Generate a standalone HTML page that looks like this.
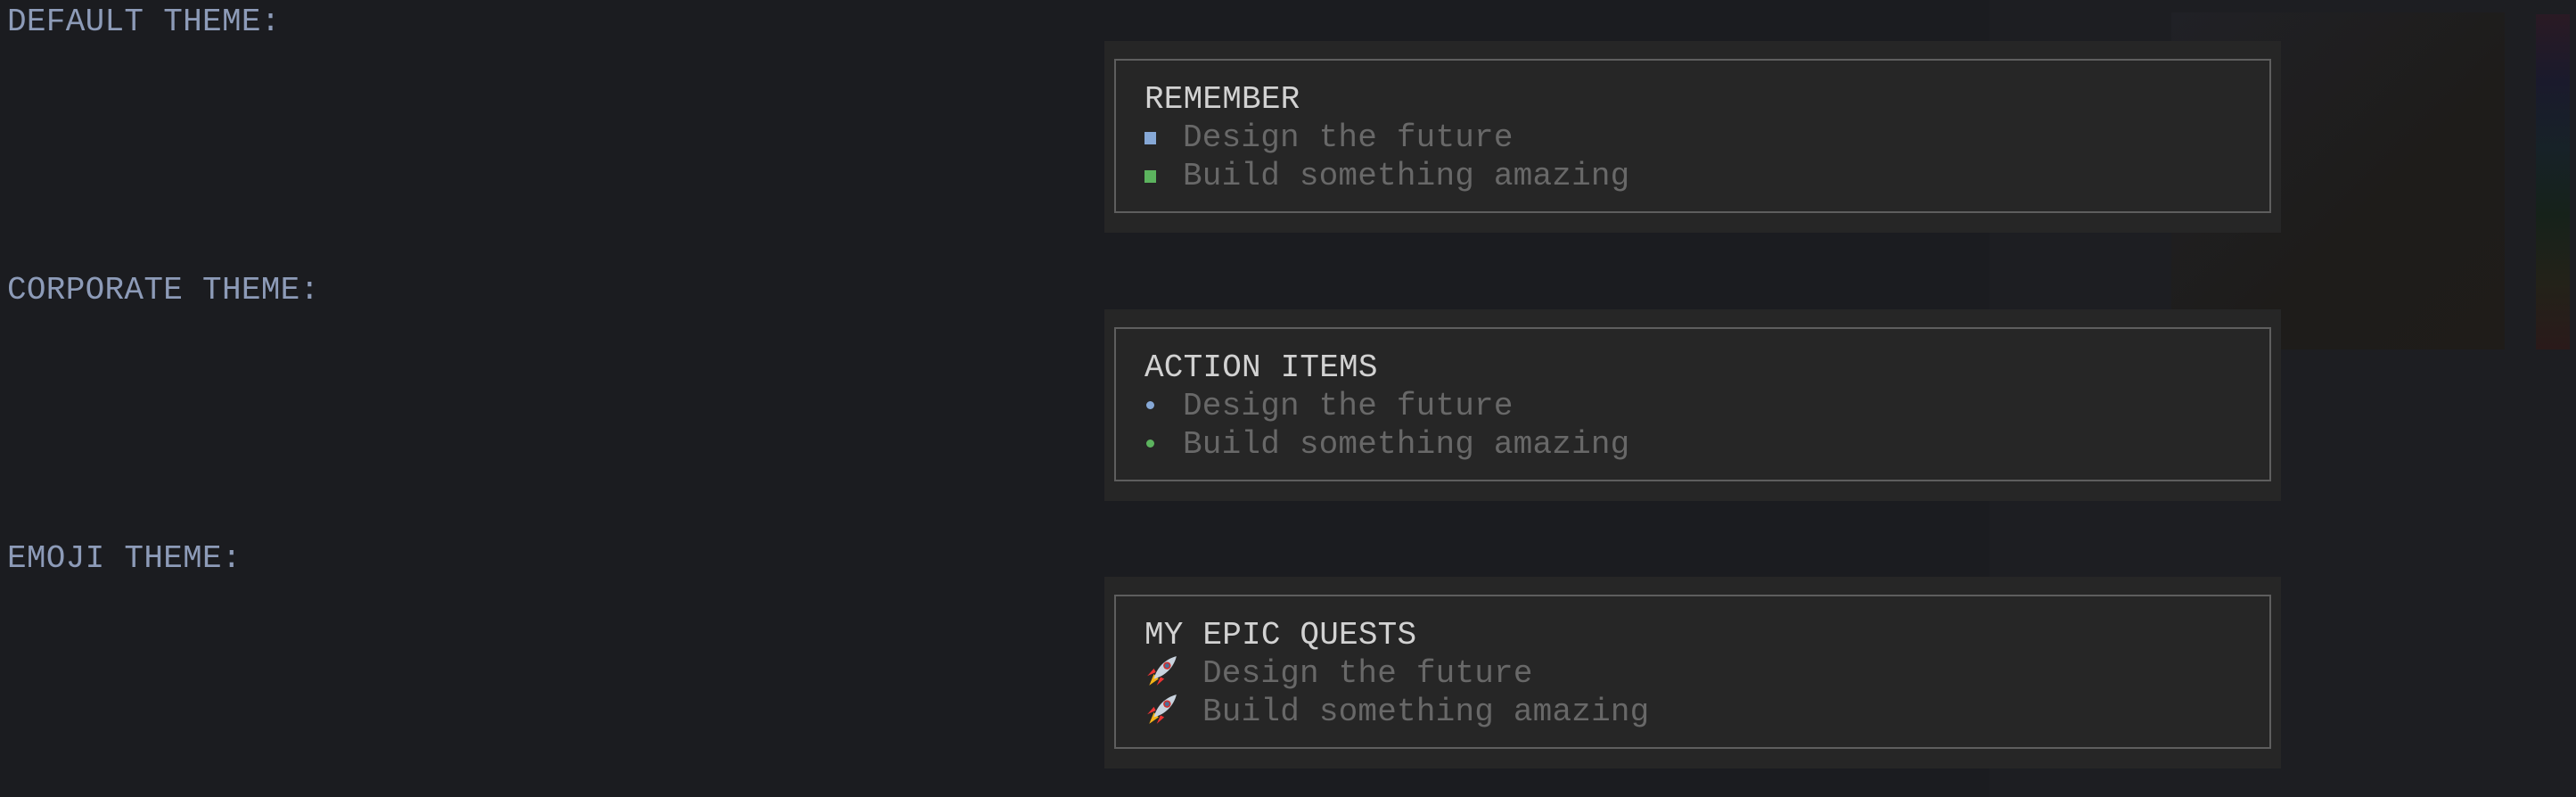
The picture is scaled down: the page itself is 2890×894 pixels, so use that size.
<!DOCTYPE html>
<html><head><meta charset="utf-8"><style>
html,body{margin:0;padding:0;}
body{width:2890px;height:894px;background:#1b1c20;position:relative;overflow:hidden;font-family:"Liberation Mono","DejaVu Sans Mono",monospace;font-size:36px;}
.rp{position:absolute;left:2232px;top:0;width:658px;height:894px;background:#1d1e22;}
.cp{position:absolute;left:2436px;top:14px;width:374px;height:378px;background:linear-gradient(135deg,#202126,#1e1c1a 60%,#1f1c19);}
.hue{position:absolute;left:2845px;top:16px;width:38px;height:376px;background:linear-gradient(#2a1a24,#1a1a2c,#172228,#16221a,#232219,#2a1a1a);}
.lbl{position:absolute;left:8px;color:#8d9bb8;line-height:43px;white-space:pre;letter-spacing:0.3px;}
.outer{position:absolute;left:1239px;width:1320px;height:215px;background:#262626;}
.inner{position:absolute;left:11px;top:20px;border:2px solid #5e5e5e;box-sizing:border-box;width:1298px;height:173px;}
.t{position:absolute;left:32px;line-height:43px;white-space:pre;letter-spacing:0.2px;}
.h{top:22px;color:#d2d2d2;}
.i1{top:65px;color:#686868;}
.i2{top:108px;color:#686868;}
.sq{display:inline-block;width:13px;height:14px;margin-right:30px;vertical-align:2px;}
.dot{display:inline-block;width:9px;height:9px;border-radius:50%;margin:0 32px 0 2px;vertical-align:6px;}
.rk{display:inline-block;width:38px;height:38px;margin-right:27px;vertical-align:-7px;}
</style></head><body>
<div class="rp"></div><div class="cp"></div><div class="hue"></div>

<div class="lbl" style="top:3px">DEFAULT THEME:</div>
<div class="lbl" style="top:304px">CORPORATE THEME:</div>
<div class="lbl" style="top:605px">EMOJI THEME:</div>

<div class="outer" style="top:46px"><div class="inner">
<div class="t h">REMEMBER</div>
<div class="t i1"><span class="sq" style="background:#86a8d6"></span>Design the future</div>
<div class="t i2"><span class="sq" style="background:#5cb35e"></span>Build something amazing</div>
</div></div>

<div class="outer" style="top:347px"><div class="inner">
<div class="t h">ACTION ITEMS</div>
<div class="t i1"><span class="dot" style="background:#86a8d6"></span>Design the future</div>
<div class="t i2"><span class="dot" style="background:#5cb35e"></span>Build something amazing</div>
</div></div>

<div class="outer" style="top:647px"><div class="inner">
<div class="t h">MY EPIC QUESTS</div>
<div class="t i1"><svg class="rk" viewBox="0 0 36 36"><path d="M12 19 L3 23 L10 15 Z" fill="#e33"/><path d="M17 24 L13 33 L21 26 Z" fill="#e33"/><path d="M5 33 L10 21 L15 26 Z" fill="#f5b316"/><path d="M10 26 C13 14 22 5 34 2 C31 14 22 23 10 26 Z" fill="#c9d3de"/><circle cx="24" cy="12" r="4" fill="#c33"/><circle cx="24" cy="12" r="2.3" fill="#4a6f98"/></svg>Design the future</div>
<div class="t i2"><svg class="rk" viewBox="0 0 36 36"><path d="M12 19 L3 23 L10 15 Z" fill="#e33"/><path d="M17 24 L13 33 L21 26 Z" fill="#e33"/><path d="M5 33 L10 21 L15 26 Z" fill="#f5b316"/><path d="M10 26 C13 14 22 5 34 2 C31 14 22 23 10 26 Z" fill="#c9d3de"/><circle cx="24" cy="12" r="4" fill="#c33"/><circle cx="24" cy="12" r="2.3" fill="#4a6f98"/></svg>Build something amazing</div>
</div></div>
</body></html>
